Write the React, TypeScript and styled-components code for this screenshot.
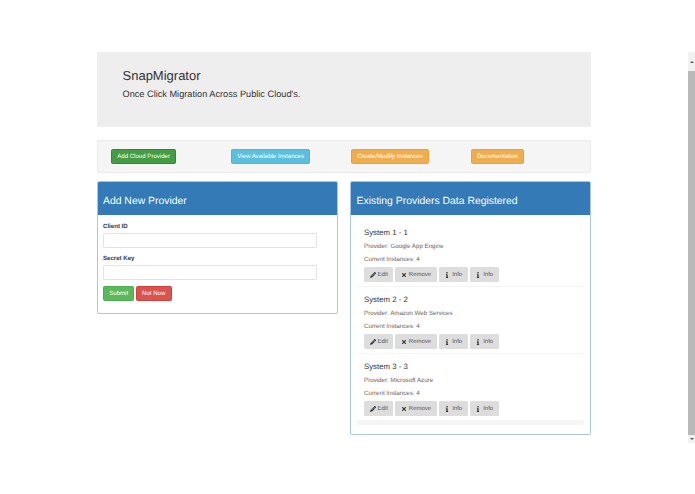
import * as React from "react";
import styled, { createGlobalStyle } from "styled-components";
import { FaInfo, FaPencilAlt, FaTimes } from "react-icons/fa";

const GlobalStyle = createGlobalStyle`
  html, body {
    margin: 0;
    padding: 0;
    background: #fff;
    overflow: hidden;
  }
  body {
    font-family: "Liberation Sans", Arial, sans-serif;
    color: #333;
    text-rendering: geometricPrecision;
  }
  * {
    box-sizing: border-box;
  }
`;

const systems = [
  { name: "System 1 - 1", provider: "Google App Engine" },
  { name: "System 2 - 2", provider: "Amazon Web Services" },
  { name: "System 3 - 3", provider: "Microsoft Azure" },
];

const navLinks = [
  { label: "Add Cloud Provider", color: "#449d44", border: "#398439" },
  { label: "View Available Instances", color: "#5bc0de", border: "#46b8da" },
  { label: "Create/Modify Instances", color: "#f0ad4e", border: "#eea236" },
  { label: "Documentation", color: "#f0ad4e", border: "#eea236" },
];

export default function App() {
  return (
    <Page>
      <GlobalStyle />
      <Container>
        <Jumbotron>
          <Title>SnapMigrator</Title>
          <Lead>Once Click Migration Across Public Cloud's.</Lead>
        </Jumbotron>

        <NavWell>
          {navLinks.map((link) => (
            <NavCell key={link.label}>
              <Button $bg={link.color} $border={link.border}>
                {link.label}
              </Button>
            </NavCell>
          ))}
        </NavWell>

        <Columns>
          <Panel>
            <PanelHeading>Add New Provider</PanelHeading>
            <FormBody>
              <Label>Client ID</Label>
              <Input />
              <Label>Secret Key</Label>
              <Input />
              <FormActions>
                <Button $bg="#5cb85c" $border="#4cae4c">
                  Submit
                </Button>
                <Button $bg="#d9534f" $border="#d43f3a">
                  Not Now
                </Button>
              </FormActions>
            </FormBody>
          </Panel>

          <Panel>
            <PanelHeading>Existing Providers Data Registered</PanelHeading>
            <ListBody>
              <List>
                {systems.map((system) => (
                  <Item key={system.name}>
                    <ItemTitle>{system.name}</ItemTitle>
                    <ItemText>Provider: {system.provider}</ItemText>
                    <ItemText>Current Instances: 4</ItemText>
                    <ItemActions>
                      <ActionButton>
                        <FaPencilAlt />
                        Edit
                      </ActionButton>
                      <ActionButton>
                        <FaTimes />
                        Remove
                      </ActionButton>
                      <ActionButton>
                        <FaInfo />
                        Info
                      </ActionButton>
                      <ActionButton>
                        <FaInfo />
                        Info
                      </ActionButton>
                    </ItemActions>
                  </Item>
                ))}
              </List>
            </ListBody>
          </Panel>
        </Columns>
      </Container>

      <Scrollbar>
        <ScrollArrow>
          <ArrowUp />
        </ScrollArrow>
        <ScrollThumb />
        <ScrollArrow $small>
          <ArrowDown />
        </ScrollArrow>
      </Scrollbar>
    </Page>
  );
}

const Page = styled.div`
  display: flex;
  width: 695px;
  height: 494px;
  overflow: hidden;
`;

const Container = styled.div`
  width: 688px;
  padding: 52px 97px 0 96.5px;
`;

const Jumbotron = styled.div`
  height: 75px;
  padding: 16px 26px 0;
  background: #eee;
  border-radius: 2px;
`;

const Title = styled.div`
  font-size: 13px;
  line-height: 16px;
`;

const Lead = styled.div`
  margin-top: 3px;
  font-size: 9.2px;
  line-height: 14px;
`;

const NavWell = styled.div`
  display: grid;
  grid-template-columns: repeat(4, 120px);
  align-items: center;
  height: 33px;
  margin-top: 13px;
  padding-left: 13.5px;
  background: #f5f5f5;
  border: 1px solid #eaeaea;
  border-radius: 2px;
`;

const NavCell = styled.div`
  display: flex;
`;

const Button = styled.button<{ $bg: string; $border: string }>`
  height: 15px;
  padding: 0 5.2px;
  font-family: inherit;
  font-size: 6.1px;
  line-height: 13px;
  color: #fff;
  white-space: nowrap;
  text-rendering: geometricPrecision;
  background: ${(p) => p.$bg};
  border: 1px solid ${(p) => p.$border};
  border-radius: 1.5px;
`;

const Columns = styled.div`
  display: grid;
  grid-template-columns: 241px 241px;
  justify-content: space-between;
  align-items: start;
  margin-top: 8px;
`;

const Panel = styled.section`
  background: #fff;
  border: 1px solid #a9c6e3;
  border-radius: 2px;
  overflow: hidden;
`;

const PanelHeading = styled.h3`
  height: 33px;
  margin: 0;
  padding: 0 5.5px;
  font-size: 10.4px;
  font-weight: 400;
  line-height: 39px;
  color: #fff;
  background: #337ab7;
`;

const FormBody = styled.div`
  height: 98px;
  padding: 8px 5.5px 0;
`;

const Label = styled.label`
  display: block;
  font-size: 6.1px;
  font-weight: 700;
  line-height: 8px;
  margin-bottom: 1.5px;
`;

const Input = styled.input`
  display: block;
  width: 214px;
  height: 15px;
  margin-bottom: 7.5px;
  background: #fff;
  border: 1px solid #e2e2e2;
  border-radius: 1.5px;
  outline: none;
`;

const FormActions = styled.div`
  display: flex;
  gap: 1.5px;
  margin-top: -1px;
`;

const ListBody = styled.div`
  padding: 5px 6px 8.5px;
`;

const List = styled.div`
  padding-bottom: 5px;
  background: #f5f5f5;
`;

const Item = styled.div`
  height: 66px;
  padding: 8px 7px 0;
  background: #fff;
  & + & {
    margin-top: 1px;
  }
`;

const ItemTitle = styled.div`
  font-size: 7.8px;
  line-height: 10px;
`;

const ItemText = styled.div`
  margin-top: 4px;
  font-size: 6.2px;
  line-height: 9px;
  color: #666;
`;

const ItemActions = styled.div`
  display: flex;
  gap: 2px;
  margin-top: 3px;
`;

const ActionButton = styled.button`
  display: inline-flex;
  align-items: center;
  justify-content: center;
  gap: 2px;
  height: 15px;
  padding: 0 5.5px;
  font-family: inherit;
  font-size: 6px;
  color: #555;
  text-rendering: geometricPrecision;
  background: #ddd;
  border: none;
  border-radius: 1.5px;

  svg {
    width: 6px;
    height: 6px;
    color: #333;
  }
`;

const Scrollbar = styled.div`
  display: flex;
  flex-direction: column;
  width: 7px;
  height: 391px;
  margin-top: 52px;
`;

const ScrollArrow = styled.div<{ $small?: boolean }>`
  display: flex;
  align-items: center;
  justify-content: center;
  height: ${(p) => (p.$small ? 8 : 19)}px;
  background: #f1f1f1;
`;

const ArrowUp = styled.div`
  width: 0;
  height: 0;
  border-left: 2px solid transparent;
  border-right: 2px solid transparent;
  border-bottom: 2px solid #555;
`;

const ArrowDown = styled.div`
  width: 0;
  height: 0;
  border-left: 2px solid transparent;
  border-right: 2px solid transparent;
  border-top: 2px solid #555;
`;

const ScrollThumb = styled.div`
  flex: 1;
  background: #b9b9b9;
`;
